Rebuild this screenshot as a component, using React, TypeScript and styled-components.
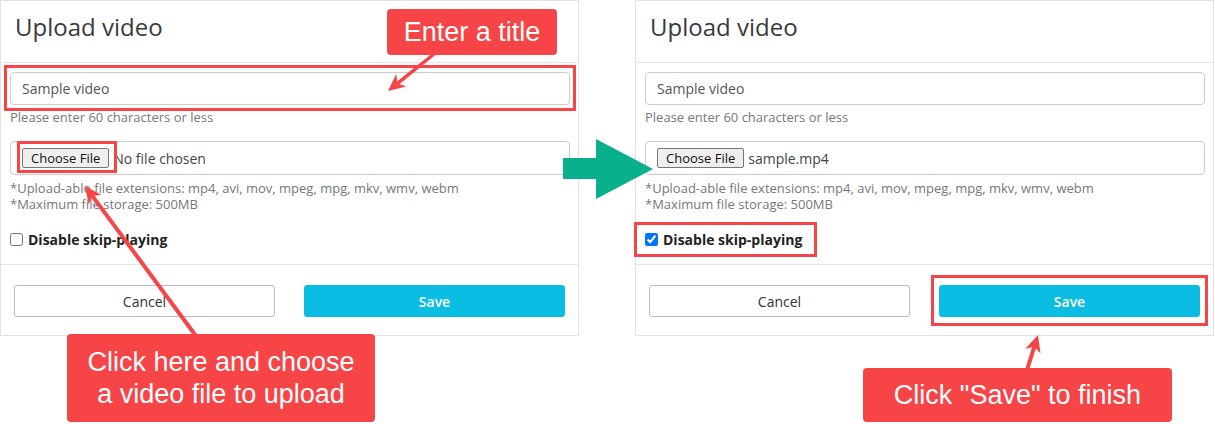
import React from 'react'
import styled, { createGlobalStyle, css } from 'styled-components'

const RED = '#f64447'

const GlobalStyle = createGlobalStyle`
  body {
    margin: 0;
    background: #fff;
  }
`

// square red frame drawn over a control, t/r/b/l = distance of the frame's outer edge
const frame = (t: number, r: number, b: number, l: number) => css`
  position: relative;

  &::after {
    content: '';
    position: absolute;
    top: -${t}px;
    right: -${r}px;
    bottom: -${b}px;
    left: -${l}px;
    border: 3px solid ${RED};
    pointer-events: none;
  }
`

const Stage = styled.div`
  position: relative;
  width: 1215px;
  height: 424px;
  display: flex;
  align-items: flex-start;
  gap: 56px;
  overflow: hidden;
  background: #fff;
`

const Panel = styled.div`
  width: 579px;
  box-sizing: border-box;
  border: 1px solid #e3e3e3;
  background: #fff;
  font-family: 'Open Sans', 'Noto Sans', sans-serif;
  color: #333;
`

const Header = styled.div`
  padding: 10px 14px 19px;
  border-bottom: 1px solid #e5e5e5;
`

const Title = styled.h2`
  margin: 0;
  font-size: 24px;
  line-height: 32px;
  font-weight: 400;
  color: #3a3a3a;
`

const Body = styled.div`
  display: flex;
  flex-direction: column;
  align-items: flex-start;
  padding: 9px 8px 15px 9px;
`

const TextInput = styled.div<{ $highlight?: boolean }>`
  align-self: stretch;
  box-sizing: border-box;
  height: 33px;
  display: flex;
  align-items: center;
  padding: 0 11px;
  border: 1px solid #ccc;
  border-radius: 4px;
  font-size: 14px;
  color: #555;
  ${p => p.$highlight && frame(8, 7, 7, 7)}
`

const Help = styled.div<{ $gap: number }>`
  margin-top: ${p => p.$gap}px;
  font-size: 13px;
  line-height: 16px;
  color: #777;
  white-space: nowrap;
`

const FileBox = styled.div`
  align-self: stretch;
  box-sizing: border-box;
  height: 34px;
  margin-top: 16px;
  display: flex;
  align-items: center;
  gap: 4px;
  padding: 0 11px;
  border: 1px solid #ccc;
  border-radius: 4px;
  font-size: 14px;
  color: #444;
`

const ChooseButton = styled.span<{ $highlight?: boolean }>`
  box-sizing: border-box;
  height: 20px;
  display: inline-flex;
  align-items: center;
  padding: 0 8px;
  border: 1px solid #767676;
  border-radius: 2px;
  background: #efefef;
  font-size: 13px;
  color: #111;
  ${p => p.$highlight && frame(8, 9, 6, 6)}
`

const CheckRow = styled.label<{ $highlight?: boolean }>`
  margin-top: 17px;
  height: 20px;
  display: inline-flex;
  align-items: center;
  gap: 5px;
  font-size: 14px;
  font-weight: 700;
  color: #222;
  ${p => p.$highlight && frame(7, 15, 8, 11)}

  input {
    width: 13px;
    height: 13px;
    margin: 0;
    accent-color: #0075ff;
  }
`

const Footer = styled.div`
  display: grid;
  grid-template-columns: 1fr 1fr;
  gap: 29px;
  padding: 20px 13px 18px;
  border-top: 1px solid #e5e5e5;
`

const Button = styled.button<{ $primary?: boolean; $highlight?: boolean }>`
  height: 32px;
  box-sizing: border-box;
  border-radius: 3px;
  font-family: inherit;
  font-size: 14px;
  font-weight: ${p => (p.$primary ? 600 : 400)};
  border: 1px solid ${p => (p.$primary ? '#0bbde2' : '#bbb')};
  background: ${p => (p.$primary ? '#0bbde2' : '#fff')};
  color: ${p => (p.$primary ? '#fff' : '#333')};
  ${p => p.$highlight && frame(11, 9, 10, 9)}
`

const Callout = styled.div<{ $x: number; $y: number; $w: number; $h: number }>`
  position: absolute;
  left: ${p => p.$x}px;
  top: ${p => p.$y}px;
  width: ${p => p.$w}px;
  height: ${p => p.$h}px;
  display: flex;
  align-items: center;
  justify-content: center;
  text-align: center;
  background: ${RED};
  border-radius: 4px;
  color: #fff;
  font-family: 'Liberation Sans', Arial, sans-serif;
  font-size: 27px;
  line-height: 32px;
`

const Overlay = styled.svg`
  position: absolute;
  left: 0;
  top: 0;
  pointer-events: none;
`

function Arrow({ x1, y1, x2, y2, width }: { x1: number; y1: number; x2: number; y2: number; width: number }) {
  const len = Math.hypot(x2 - x1, y2 - y1)
  const ux = (x2 - x1) / len
  const uy = (y2 - y1) / len
  const nx = -uy
  const ny = ux
  const head = 17
  const half = 8
  const bx = x2 - ux * head
  const by = y2 - uy * head
  const mx = x2 - ux * head * 0.72
  const my = y2 - uy * head * 0.72
  const pts = [
    [x2, y2],
    [bx + nx * half, by + ny * half],
    [mx, my],
    [bx - nx * half, by - ny * half]
  ]
    .map(p => p.map(v => v.toFixed(1)).join(','))
    .join(' ')
  return (
    <g fill={RED} stroke={RED}>
      <line x1={x1} y1={y1} x2={mx} y2={my} strokeWidth={width} />
      <polygon points={pts} stroke="none" />
    </g>
  )
}

interface FormProps {
  fileName?: string
  checked?: boolean
  stage: 'before' | 'after'
}

function UploadForm({ fileName, checked, stage }: FormProps) {
  const before = stage === 'before'
  return (
    <Panel>
      <Header>
        <Title>Upload video</Title>
      </Header>
      <Body>
        <TextInput $highlight={before}>Sample video</TextInput>
        <Help $gap={4}>Please enter 60 characters or less</Help>
        <FileBox>
          <ChooseButton $highlight={before}>Choose File</ChooseButton>
          <span>{fileName || 'No file chosen'}</span>
        </FileBox>
        <Help $gap={5}>
          *Upload-able file extensions: mp4, avi, mov, mpeg, mpg, mkv, wmv, webm
          <br />
          *Maximum file storage: 500MB
        </Help>
        <CheckRow $highlight={!before}>
          <input type="checkbox" checked={!!checked} readOnly />
          Disable skip-playing
        </CheckRow>
      </Body>
      <Footer>
        <Button>Cancel</Button>
        <Button $primary $highlight={!before}>
          Save
        </Button>
      </Footer>
    </Panel>
  )
}

export default function App() {
  return (
    <>
      <GlobalStyle />
      <Stage>
        <UploadForm stage="before" />
        <UploadForm stage="after" fileName="sample.mp4" checked />

        <Overlay width={1215} height={424} viewBox="0 0 1215 424">
          <polygon
            points="563,158 596,158 596,139 653,169 596,199 596,179 563,179"
            fill="#0aaf8c"
          />
          <Arrow x1={434} y1={54} x2={388} y2={91} width={3.5} />
          <Arrow x1={196} y1={336} x2={85} y2={186} width={4} />
          <Arrow x1={1027} y1={370} x2={1038} y2={335} width={4} />
        </Overlay>

        <Callout $x={387} $y={9} $w={170} $h={46}>
          Enter a title
        </Callout>
        <Callout $x={67} $y={334} $w={308} $h={88}>
          Click here and choose
          <br />
          a video file to upload
        </Callout>
        <Callout $x={863} $y={368} $w={309} $h={54}>
          Click "Save" to finish
        </Callout>
      </Stage>
    </>
  )
}
